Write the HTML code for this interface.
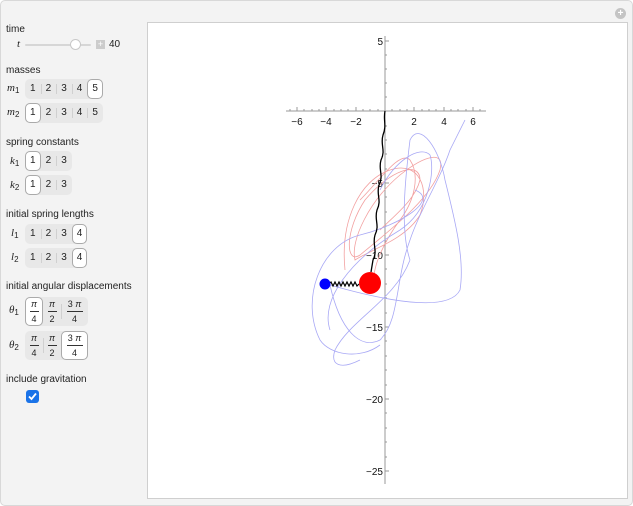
<!DOCTYPE html>
<html><head><meta charset="utf-8"><style>
*{margin:0;padding:0;box-sizing:border-box}
body{width:633px;height:506px;background:#fff;font-family:"Liberation Sans",sans-serif;font-size:10px;color:#222;position:relative;overflow:hidden}
#frame{position:absolute;left:0;top:0;width:633px;height:506px;background:#f3f3f3;border:1px solid #d8d8d8;border-radius:5px}
.lbl{position:absolute;left:6px;font-size:10px}
.v{position:absolute;font-style:italic;font-family:"Liberation Serif",serif;font-size:11px}
.v sub{font-style:normal;font-family:"Liberation Sans",sans-serif;font-size:8px;vertical-align:-2px}
.grp{position:absolute;left:25px;height:20px;background:#e8e8e8;border-radius:5px;display:flex}
.grp>div{width:15.6px;height:20px;line-height:20px;text-align:center;font-size:10px;position:relative}
.grp>div+div:before{content:"";position:absolute;left:0;top:5px;height:10px;border-left:1px solid #d0d0d0}
.grp>div.s{background:#fff;border:1px solid #aaa;border-radius:5px;line-height:18px}
.grp>div.s:before,.grp>div.s+div:before{display:none}
.fg{height:29px}
.fg>div,.fg>div.s{height:29px;line-height:10px;font-size:9px;display:flex;flex-direction:column;align-items:center;justify-content:center;width:18px}
.fg>div p{white-space:nowrap}
.fg>div span{display:block;border-top:1px solid #333;width:9px;margin-top:2px;padding-top:2px;text-align:center}
.fg>div.w{width:27px}
.fg>div.w span{width:16px}
.fg>div+div:before{top:7px;height:15px}
#plot{position:absolute;left:147px;top:22px;width:481px;height:477px;background:#fff;border:1px solid #cfcfcf}
</style></head><body>
<div id="frame"></div>
<div style="position:absolute;left:615px;top:8px;width:11px;height:11px;border-radius:50%;background:#c4c4c4;color:#fff;font-size:10px;line-height:11px;text-align:center;font-weight:bold">+</div>
<div class="lbl" style="top:24px">time</div>
<div class="v" style="left:17px;top:38px">t</div>
<div style="position:absolute;left:25px;top:44px;width:66px;height:2px;background:#d6d6d6;border-radius:1px"></div>
<div style="position:absolute;left:70px;top:39px;width:11px;height:11px;border-radius:50%;background:#fff;border:1px solid #c8c8c8"></div>
<div style="position:absolute;left:96px;top:40px;width:9px;height:9px;background:#ccc;color:#fff;font-size:9px;line-height:9px;text-align:center">+</div>
<div style="position:absolute;left:109px;top:39px">40</div>

<div class="lbl" style="top:65px">masses</div>
<div class="v" style="left:7px;top:82px">m<sub>1</sub></div>
<div class="grp" style="top:79px"><div>1</div><div>2</div><div>3</div><div>4</div><div class="s">5</div></div>
<div class="v" style="left:7px;top:106px">m<sub>2</sub></div>
<div class="grp" style="top:103px"><div class="s">1</div><div>2</div><div>3</div><div>4</div><div>5</div></div>

<div class="lbl" style="top:137px">spring constants</div>
<div class="v" style="left:10px;top:155px">k<sub>1</sub></div>
<div class="grp" style="top:151px"><div class="s">1</div><div>2</div><div>3</div></div>
<div class="v" style="left:10px;top:179px">k<sub>2</sub></div>
<div class="grp" style="top:175px"><div class="s">1</div><div>2</div><div>3</div></div>

<div class="lbl" style="top:209px">initial spring lengths</div>
<div class="v" style="left:11px;top:227px">l<sub>1</sub></div>
<div class="grp" style="top:224px"><div>1</div><div>2</div><div>3</div><div class="s">4</div></div>
<div class="v" style="left:11px;top:251px">l<sub>2</sub></div>
<div class="grp" style="top:248px"><div>1</div><div>2</div><div>3</div><div class="s">4</div></div>

<div class="lbl" style="top:281px">initial angular displacements</div>
<div class="v" style="left:9px;top:304px">θ<sub>1</sub></div>
<div class="grp fg" style="top:297px"><div class="s"><p><i>π</i></p><span>4</span></div><div><p><i>π</i></p><span>2</span></div><div class="w"><p>3 <i>π</i></p><span>4</span></div></div>
<div class="v" style="left:9px;top:339px">θ<sub>2</sub></div>
<div class="grp fg" style="top:331px"><div><p><i>π</i></p><span>4</span></div><div><p><i>π</i></p><span>2</span></div><div class="w s"><p>3 <i>π</i></p><span>4</span></div></div>

<div class="lbl" style="top:374px">include gravitation</div>
<div style="position:absolute;left:26px;top:390px;width:13px;height:13px;border-radius:3px;background:#1a73e8">
<svg width="13" height="13"><path d="M3 6.5 L5.5 9 L10 3.5" stroke="#fff" stroke-width="1.8" fill="none"/></svg></div>

<div id="plot"></div>
<svg style="position:absolute;left:0;top:0" width="633" height="506" font-family="Liberation Sans" font-size="10">
<g stroke="#999" stroke-width="1">
<line x1="286" y1="111" x2="486" y2="111"/>
<line x1="385" y1="36" x2="385" y2="484"/>
</g>
<g stroke="#999" stroke-width="1">
<path d="M297 111v-4M312 111v-2M326 111v-4M341 111v-2M356 111v-4M370 111v-2M400 111v-2M414 111v-4M429 111v-2M444 111v-4M458 111v-2M473 111v-4M290 111v-2M304 111v-2M319 111v-2M334 111v-2M348 111v-2M363 111v-2M378 111v-2M392 111v-2M407 111v-2M422 111v-2M436 111v-2M451 111v-2M466 111v-2M480 111v-2"/>
<path d="M385 41h4M385 55h2M385 69h2M385 83h2M385 97h2M385 126h2M385 140h2M385 154h2M385 169h2M385 183h4M385 197h2M385 212h2M385 226h2M385 241h2M385 255h4M385 269h2M385 284h2M385 298h2M385 313h2M385 327h4M385 341h2M385 356h2M385 370h2M385 385h2M385 399h4M385 413h2M385 428h2M385 442h2M385 457h2M385 471h4"/>
</g>
<g fill="#111" text-anchor="middle">
<text x="297" y="125">−6</text><text x="326" y="125">−4</text><text x="356" y="125">−2</text>
<text x="414" y="125">2</text><text x="444" y="125">4</text><text x="473" y="125">6</text>
</g>
<g fill="#111" text-anchor="end">
<text x="383" y="45">5</text><text x="383" y="187">−5</text><text x="383" y="259">−10</text>
<text x="383" y="331">−15</text><text x="383" y="403">−20</text><text x="383" y="475">−25</text>
</g>
<g fill="none" stroke-width="0.8">
<path stroke="#f2a0a0" d="M345 270 C340 220 360 180 390 170 C420 160 430 190 420 215 C405 240 370 250 355 260 C350 240 370 200 400 175 C425 155 445 150 440 170 C430 200 390 230 360 255 C345 265 345 230 365 200 C390 170 420 160 420 180 C415 200 395 215 380 230 M360 200 C380 180 400 150 410 160 C420 175 415 200 400 220 C385 240 370 270 375 285"/>
<path stroke="#a8a8f5" d="M320 340 C300 300 320 245 360 235 C400 225 440 200 415 190 M410 260 C400 230 405 180 410 140 C420 120 440 150 445 180 C455 220 465 260 460 290 C450 310 400 305 330 285 M330 285 C340 330 360 350 380 340 C400 320 395 280 410 240 C420 210 440 180 450 150 C455 140 460 130 465 120 M330 330 C320 300 350 260 400 230 C430 210 435 170 430 155 C420 145 395 160 380 190 M320 340 C330 355 360 360 380 345 M410 260 C395 300 350 320 335 350 C330 365 340 370 360 360"/>
</g>
<path d="M385 111 C383 120 387 125 383 135 C380 145 386 150 381 160 C378 170 384 175 379 185 C376 195 382 200 377 210 C374 220 380 225 375 235 C372 245 378 250 373 260 L371 272" fill="none" stroke="#000" stroke-width="1.3"/>
<path d="M329 284 l2 -2 l2 4 l2 -4 l2 4 l2 -4 l2 4 l2 -4 l2 4 l2 -4 l2 4 l2 -4 l2 4 l2 -4 l2 4 l2 -2" fill="none" stroke="#000" stroke-width="1.2"/>
<circle cx="325" cy="284" r="5.5" fill="#0000ff"/>
<circle cx="370" cy="283" r="11" fill="#ff0000"/>
</svg>
</body></html>
